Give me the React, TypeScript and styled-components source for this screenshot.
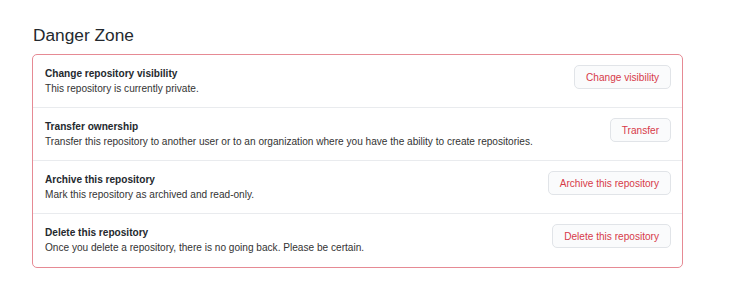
import React from "react";
import styled, { createGlobalStyle } from "styled-components";

const GlobalStyle = createGlobalStyle`
  body {
    margin: 0;
    background: #fff;
    font-family: "Liberation Sans", Arial, sans-serif;
    color: #24292e;
  }
`;

const Page = styled.div`
  padding: 24px 60px 0 32px;
`;

const Heading = styled.h2`
  margin: 0 0 7px 1px;
  font-size: 17.3px;
  font-weight: 400;
  line-height: 23px;
  color: #24292e;
`;

const Box = styled.div`
  border: 1px solid #e68a94;
  border-radius: 5px;
  width: 649px;
`;

const Row = styled.div<{ $last?: boolean }>`
  display: flex;
  align-items: flex-start;
  justify-content: space-between;
  height: 52px;
  padding: 10px 11px 0 12px;
  box-sizing: border-box;
  height: 53px;
  border-bottom: ${(p) => (p.$last ? "none" : "1px solid #e9ebee")};
`;

const Info = styled.div`
  display: flex;
  flex-direction: column;
  gap: 2px;
  padding-top: 2px;
`;

const Title = styled.strong`
  font-size: 10.1px;
  font-weight: 700;
  line-height: 13px;
  color: #24292e;
`;

const Desc = styled.span`
  font-size: 10.1px;
  line-height: 13px;
  color: #333;
`;

const DangerButton = styled.button`
  height: 24px;
  padding: 0 11px;
  font-family: inherit;
  font-size: 10.1px;
  color: #d73a49;
  background: #fafbfc;
  border: 1px solid #e1e4e8;
  border-radius: 5px;
  cursor: pointer;
`;

const items = [
  {
    title: "Change repository visibility",
    desc: "This repository is currently private.",
    action: "Change visibility",
  },
  {
    title: "Transfer ownership",
    desc: "Transfer this repository to another user or to an organization where you have the ability to create repositories.",
    action: "Transfer",
  },
  {
    title: "Archive this repository",
    desc: "Mark this repository as archived and read-only.",
    action: "Archive this repository",
  },
  {
    title: "Delete this repository",
    desc: "Once you delete a repository, there is no going back. Please be certain.",
    action: "Delete this repository",
  },
];

export default function App() {
  return (
    <>
      <GlobalStyle />
      <Page>
        <Heading>Danger Zone</Heading>
        <Box>
          {items.map((item, i) => (
            <Row key={item.title} $last={i === items.length - 1}>
              <Info>
                <Title>{item.title}</Title>
                <Desc>{item.desc}</Desc>
              </Info>
              <DangerButton>{item.action}</DangerButton>
            </Row>
          ))}
        </Box>
      </Page>
    </>
  );
}
